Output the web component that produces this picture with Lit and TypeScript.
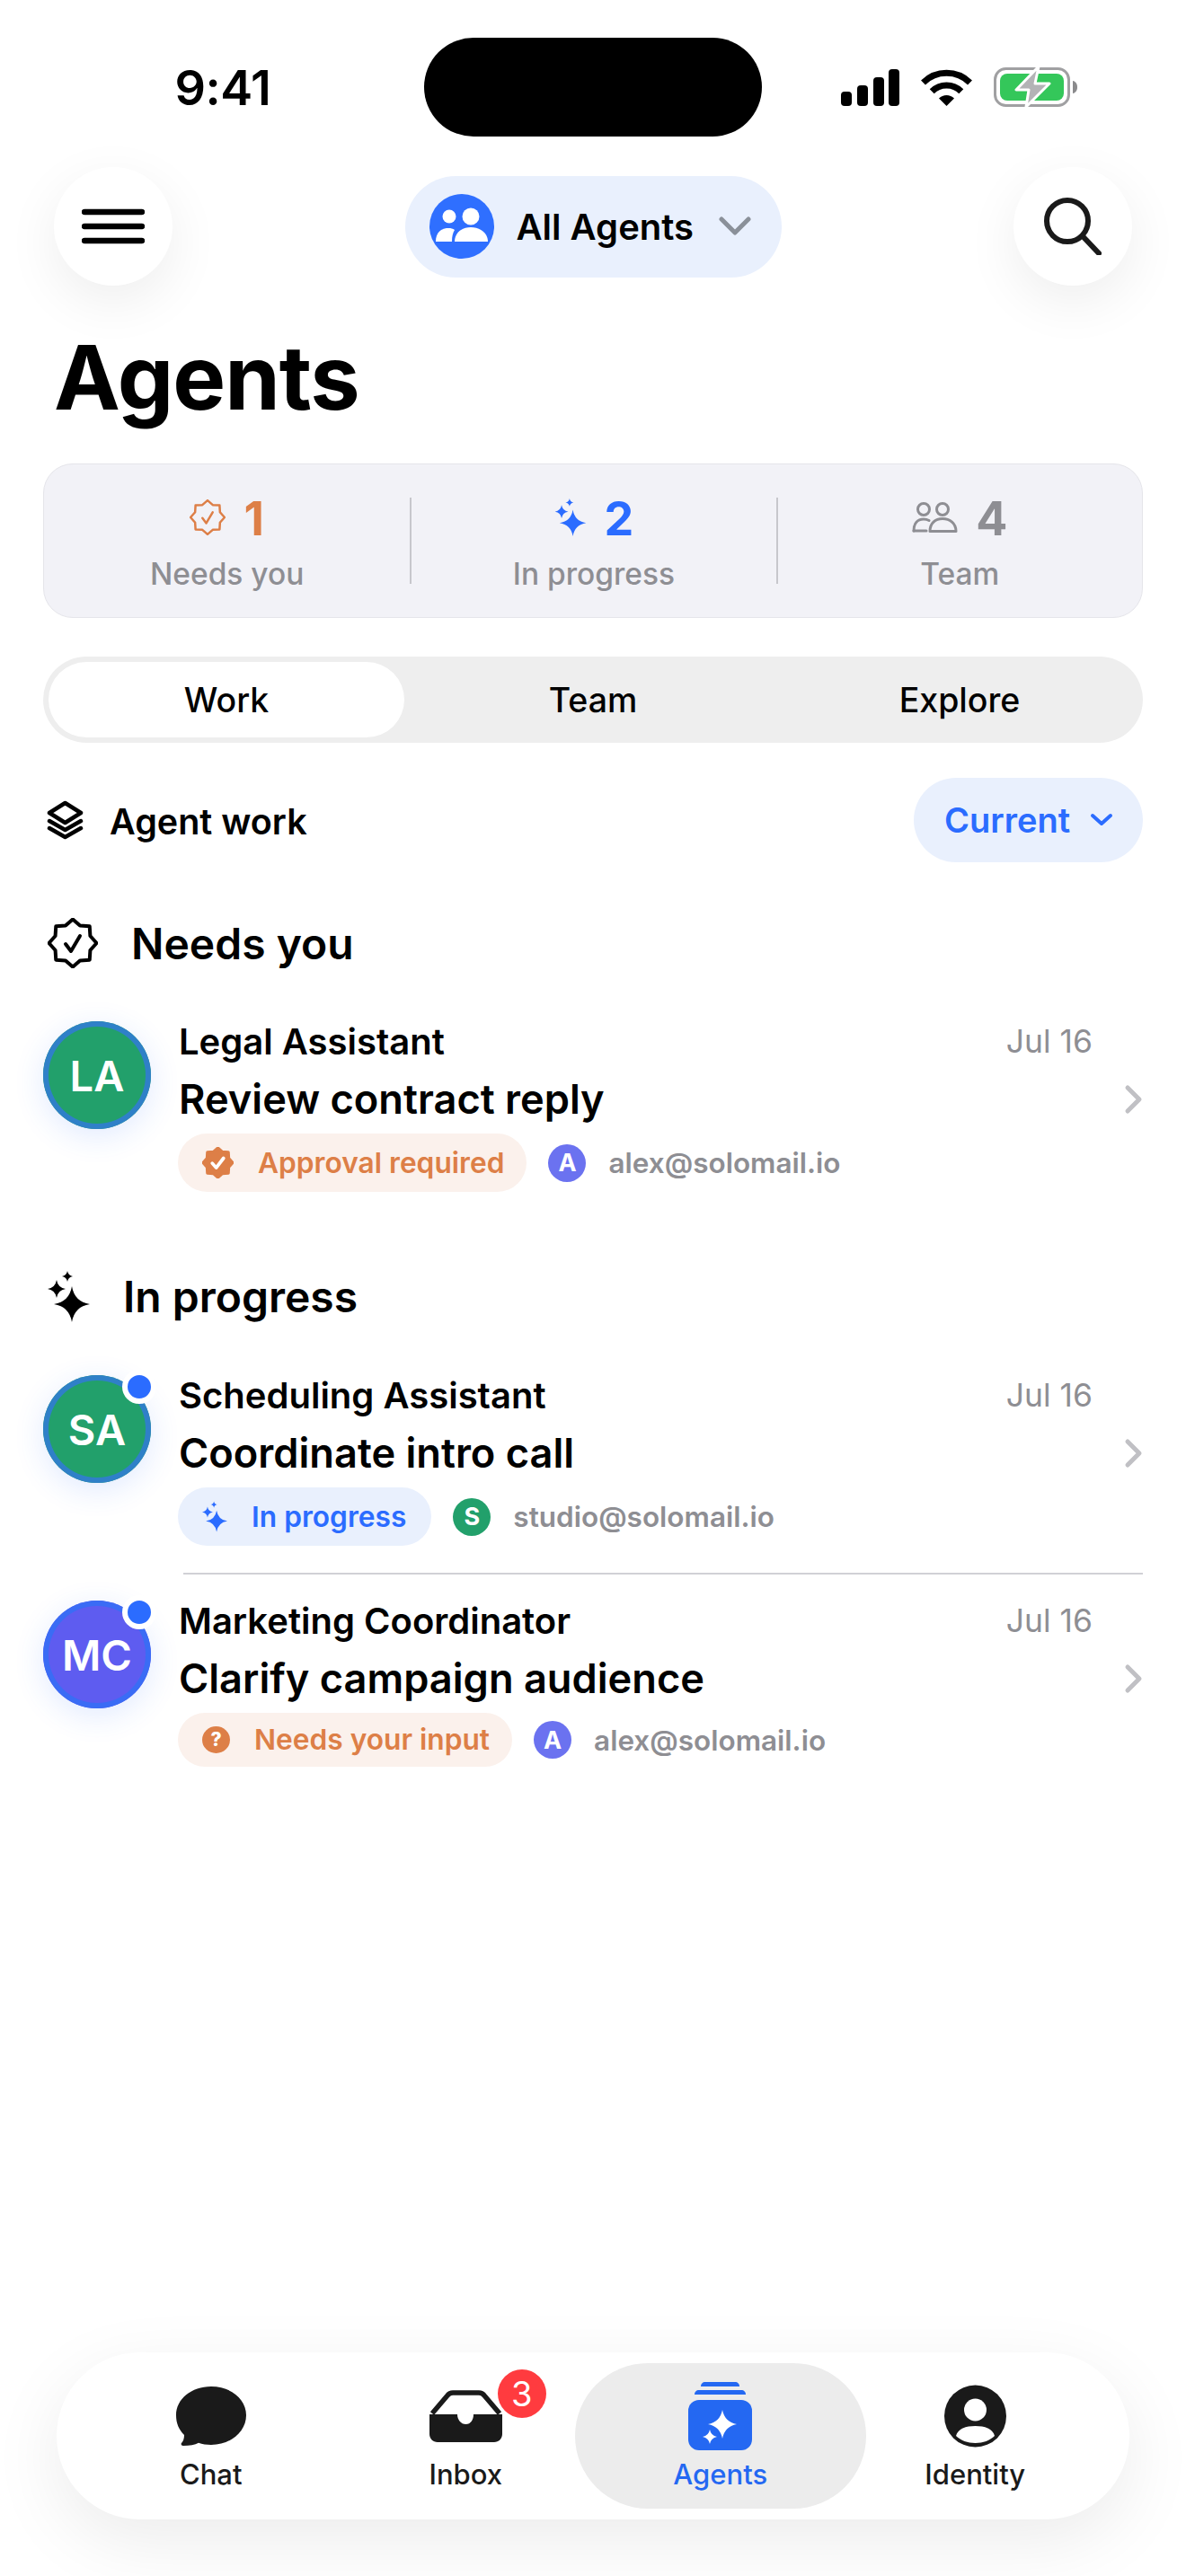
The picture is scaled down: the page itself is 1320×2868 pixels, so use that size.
import { LitElement, html, css } from 'lit';
import { customElement } from 'lit/decorators.js';

// four point star used by every sparkle icon
const star = (x: number, y: number, r: number, k = 0.14) =>
  `M${x} ${y - r}Q${x + r * k} ${y - r * k} ${x + r} ${y}Q${x + r * k} ${y + r * k} ${x} ${y + r}` +
  `Q${x - r * k} ${y + r * k} ${x - r} ${y}Q${x - r * k} ${y - r * k} ${x} ${y - r}Z`;

// scalloped badge outline, 16 vertices round the centre of a 56 box
const badgePoints = (() => {
  const pts: string[] = [];
  for (let i = 0; i < 16; i++) {
    const a = (i * Math.PI) / 8 - Math.PI / 2;
    const r = i % 2 === 0 ? 26.5 : 21;
    pts.push(`${(28 + r * Math.cos(a)).toFixed(2)},${(28 + r * Math.sin(a)).toFixed(2)}`);
  }
  return pts.join(' ');
})();

const sparkles = (w: number, h: number, color: string) => html`
  <svg width=${w} height=${h} viewBox="0 0 47 57" fill=${color}>
    <path d=${star(27, 37, 20)} />
    <path d=${star(10, 20, 10)} />
    <path d=${star(22, 6, 6)} />
  </svg>`;

const badgeOutline = (size: number, color: string, sw: number) => html`
  <svg width=${size} height=${size} viewBox="0 0 56 56" fill="none" stroke=${color} stroke-width=${sw} stroke-linejoin="round" stroke-linecap="round">
    <polygon points=${badgePoints} />
    <path d="M20 29l6 8 10-17" />
  </svg>`;

const badgeFilled = html`
  <svg width="35" height="35" viewBox="0 0 56 56">
    <polygon points=${badgePoints} fill="#dd7f47" stroke="#dd7f47" stroke-width="5" stroke-linejoin="round" />
    <path d="M18 29l7 8 13-17" fill="none" stroke="#fff" stroke-width="6" stroke-linecap="round" stroke-linejoin="round" />
  </svg>`;

const questionIcon = html`<span class="q">?</span>`;

const chevronRight = html`
  <svg class="row-chev" width="22" height="34" viewBox="0 0 22 34" fill="none" stroke="#c0c0c4" stroke-width="5" stroke-linecap="round" stroke-linejoin="round">
    <path d="M4 4l13 13L4 30" />
  </svg>`;

interface Row {
  initials: string;
  tone: 'green' | 'indigo';
  live?: boolean;
  name: string;
  title: string;
  status: string;
  kind: 'orange' | 'blue';
  icon: unknown;
  letter: string;
  letterBg: string;
  email: string;
}

const needsYou: Row[] = [
  {
    initials: 'LA', tone: 'green', name: 'Legal Assistant', title: 'Review contract reply',
    status: 'Approval required', kind: 'orange', icon: badgeFilled,
    letter: 'A', letterBg: '#6b72f0', email: 'alex@solomail.io',
  },
];

const inProgress: Row[] = [
  {
    initials: 'SA', tone: 'green', live: true, name: 'Scheduling Assistant', title: 'Coordinate intro call',
    status: 'In progress', kind: 'blue', icon: sparkles(28, 35, '#2b6cff'),
    letter: 'S', letterBg: '#22a06b', email: 'studio@solomail.io',
  },
  {
    initials: 'MC', tone: 'indigo', live: true, name: 'Marketing Coordinator', title: 'Clarify campaign audience',
    status: 'Needs your input', kind: 'orange', icon: questionIcon,
    letter: 'A', letterBg: '#6b72f0', email: 'alex@solomail.io',
  },
];

@customElement('app-root')
export class AppRoot extends LitElement {
  static styles = css`
    :host {
      display: block;
      width: 1320px;
      background: #fff;
      color: #000;
      font-family: Inter, "Noto Sans", sans-serif;
    }
    .page {
      display: flex;
      flex-direction: column;
      min-height: 2868px;
    }

    /* status bar */
    .status {
      display: grid;
      grid-template-columns: 1fr 376px 1fr;
      align-items: center;
      padding-top: 42px;
      height: 110px;
      box-sizing: content-box;
    }
    .time {
      font-size: 54px;
      font-weight: 600;
      text-align: center;
      padding-left: 24px;
      letter-spacing: -0.5px;
    }
    .island {
      height: 110px;
      background: #000;
      border-radius: 55px;
    }
    .sys {
      display: flex;
      align-items: center;
      padding-left: 88px;
      gap: 24px;
    }

    /* top nav */
    .nav {
      display: flex;
      align-items: center;
      justify-content: space-between;
      margin-top: 34px;
      padding: 0 60px;
      height: 132px;
    }
    .round {
      width: 132px;
      height: 132px;
      border-radius: 50%;
      background: #fff;
      box-shadow: 0 18px 60px rgba(0, 0, 0, 0.07);
      display: flex;
      align-items: center;
      justify-content: center;
    }
    .scope {
      display: flex;
      align-items: center;
      height: 113px;
      width: 419px;
      box-sizing: border-box;
      padding-left: 27px;
      background: #e9f0fd;
      border-radius: 57px;
      font-size: 40px;
      font-weight: 600;
    }
    .scope span {
      margin-left: 25px;
    }
    .scope svg:last-child {
      margin-left: 28px;
    }

    h1 {
      margin: 42px 0 36px;
      padding-left: 60px;
      font-size: 99px;
      line-height: 120px;
      font-weight: 700;
      letter-spacing: -1px;
    }

    /* summary card */
    .stats {
      margin: 0 48px;
      display: grid;
      grid-template-columns: repeat(3, 1fr);
      padding: 37px 0;
      background: #f2f2f7;
      border: 1px solid #e5e5ea;
      border-radius: 33px;
    }
    .stat {
      height: 96px;
      display: flex;
      flex-direction: column;
      align-items: center;
    }
    .stat + .stat {
      border-left: 2px solid #c7c7cc;
    }
    .stat-top {
      height: 44px;
      display: flex;
      align-items: center;
      gap: 20px;
      font-size: 52px;
      font-weight: 700;
    }
    .stat-top span {
      padding-top: 3px;
    }
    .stat-label {
      margin-top: 28px;
      line-height: 26px;
      font-size: 33.500px;
      font-weight: 500;
      color: #8e8e93;
    }
    .orange { color: #dd7f47; }
    .blue { color: #2b6cff; }
    .grey { color: #8e8e93; }

    /* segmented control */
    .tabs {
      margin: 43px 48px 0;
      display: grid;
      grid-template-columns: repeat(3, 1fr);
      height: 96px;
      background: #eeeeee;
      border-radius: 48px;
      font-size: 37.500px;
      font-weight: 500;
    }
    .tabs div {
      margin: 6px;
      display: flex;
      align-items: center;
      justify-content: center;
      border-radius: 42px;
    }
    .tabs .on {
      background: #fff;
    }

    /* agent work row */
    .work {
      margin: 39px 48px 0;
      display: flex;
      align-items: center;
      justify-content: space-between;
    }
    .work-label {
      display: flex;
      align-items: center;
      gap: 29px;
      padding-left: 4px;
      font-size: 39.500px;
      font-weight: 600;
    }
    .work-label span {
      padding-top: 3px;
    }
    .current {
      width: 255px;
      height: 94px;
      box-sizing: border-box;
      padding-left: 34px;
      display: flex;
      align-items: center;
      gap: 22px;
      background: #e9f0fd;
      border-radius: 47px;
      color: #2b6cff;
      font-size: 38px;
      font-weight: 600;
    }

    /* sections */
    .head {
      display: flex;
      align-items: center;
      padding-left: 53px;
      height: 56px;
      font-size: 48px;
      font-weight: 600;
    }
    .head.first {
      margin-top: 62px;
      gap: 37px;
    }
    .head.second {
      margin-top: 88px;
      gap: 37px;
      height: 57px;
    }
    .list {
      margin-top: 58px;
      padding: 0 48px;
    }
    .row {
      display: flex;
      align-items: flex-start;
    }
    .divider {
      height: 2px;
      background: #d1d1d6;
      margin: 30px 0 28px 156px;
    }
    .avatar {
      position: relative;
      flex: none;
      width: 120px;
      height: 120px;
      margin-top: 1px;
      border-radius: 50%;
      display: flex;
      align-items: center;
      justify-content: center;
      color: #fff;
      font-size: 47px;
      font-weight: 600;
    }
    .avatar.green {
      background: #22a06b;
      box-shadow: inset 0 0 0 6px #2f80c8, 0 8px 34px rgba(43, 108, 255, 0.14);
    }
    .avatar.indigo {
      background: #5e5cf0;
      box-shadow: inset 0 0 0 6px #3a6cf5, 0 8px 34px rgba(43, 108, 255, 0.14);
    }
    .dot {
      position: absolute;
      top: -6px;
      right: -6px;
      width: 26px;
      height: 26px;
      border: 6px solid #fff;
      border-radius: 50%;
      background: #2b6cff;
    }
    .body {
      flex: 1;
      margin-left: 31px;
      min-width: 0;
    }
    .line1 {
      display: flex;
      justify-content: space-between;
      align-items: center;
      height: 46px;
      font-size: 40px;
      font-weight: 600;
    }
    .date {
      font-size: 35.500px;
      font-weight: 400;
      color: #8e8e93;
    }
    .line2 {
      margin-top: 14px;
      height: 56px;
      line-height: 56px;
      font-size: 45.200px;
      font-weight: 600;
    }
    .line3 {
      margin-top: 10px;
      display: flex;
      align-items: center;
      margin-left: -1px;
    }
    .pill {
      display: flex;
      align-items: center;
      gap: 27px;
      padding: 15px 25px 15px 27px;
      border-radius: 33px;
      font-size: 31.700px;
      line-height: 30px;
      font-weight: 600;
    }
    .pill.orange { background: #fbf1ec; }
    .pill.blue { background: #e9f0fd; padding-right: 28px; }
    .q {
      width: 31px;
      height: 30px;
      border-radius: 50%;
      background: #dd7f47;
      color: #fff;
      font-size: 21px;
      font-weight: 800;
      display: flex;
      align-items: center;
      justify-content: center;
    }
    .letter {
      width: 42px;
      height: 42px;
      margin-left: 24px;
      border-radius: 50%;
      display: flex;
      align-items: center;
      justify-content: center;
      color: #fff;
      font-size: 27px;
      font-weight: 700;
    }
    .email {
      margin-left: 25px;
      font-size: 31.500px;
      font-weight: 600;
      color: #8e8e93;
    }
    .side {
      flex: none;
      width: 57px;
      height: 176px;
      display: flex;
      align-items: center;
      justify-content: flex-end;
      margin-right: -1px;
    }

    /* bottom tab bar */
    .bar {
      margin: auto 63px 63px;
      height: 186px;
      padding: 0 30px;
      display: grid;
      grid-template-columns: repeat(4, 1fr);
      background: #fff;
      border-radius: 93px;
      box-shadow: 0 24px 80px rgba(0, 0, 0, 0.08);
    }
    .item {
      margin: 12px 0;
      padding-top: 21px;
      display: flex;
      flex-direction: column;
      align-items: center;
      color: #1a1a1a;
      font-size: 31px;
      font-weight: 500;
    }
    .item.on {
      margin: 12px -20px;
      background: #ececec;
      border-radius: 81px;
      color: #2468f2;
    }
    .ico {
      position: relative;
      height: 76px;
      display: flex;
      align-items: center;
    }
    .item span {
      margin-top: 7px;
      line-height: 40px;
    }
    .ico b {
      position: absolute;
      left: 76px;
      top: -14px;
      width: 54px;
      height: 54px;
      border-radius: 50%;
      background: #ff3b3f;
      color: #fff;
      font-size: 38px;
      font-weight: 400;
      display: flex;
      align-items: center;
      justify-content: center;
    }
  `;

  private renderRow(r: Row) {
    return html`
      <div class="row">
        <div class="avatar ${r.tone}">
          ${r.initials}
          ${r.live ? html`<i class="dot"></i>` : null}
        </div>
        <div class="body">
          <div class="line1"><span>${r.name}</span><span class="date">Jul 16</span></div>
          <div class="line2">${r.title}</div>
          <div class="line3">
            <div class="pill ${r.kind}">${r.icon}<span>${r.status}</span></div>
            <span class="letter" style="background:${r.letterBg}">${r.letter}</span>
            <span class="email">${r.email}</span>
          </div>
        </div>
        <div class="side">${chevronRight}</div>
      </div>`;
  }

  private statusBar() {
    return html`
      <div class="status">
        <div class="time">9:41</div>
        <div class="island"></div>
        <div class="sys">
          <svg width="65" height="41" viewBox="0 0 65 41" fill="#000">
            <rect x="0" y="25" width="12" height="16" rx="4" />
            <rect x="18" y="18" width="12" height="23" rx="4" />
            <rect x="36" y="9" width="12" height="32" rx="4" />
            <rect x="53" y="0" width="12" height="41" rx="4" />
          </svg>
          <svg width="57" height="42" viewBox="0 0 57 42" fill="none" stroke="#000" stroke-width="7">
            <path d="M2.500 16A37 37 0 0 1 54.500 16" />
            <path d="M12.200 25.700A23 23 0 0 1 44.800 25.700" />
            <path d="M28.500 42L20 33.500A12 12 0 0 1 37 33.500Z" fill="#000" stroke="none" />
          </svg>
          <svg width="93" height="48" viewBox="0 -2 93 48">
            <rect x="1.500" y="1.500" width="82" height="41" rx="12" fill="none" stroke="#a0a0a2" stroke-width="3" />
            <rect x="7" y="7" width="71" height="30" rx="8" fill="#34c75a" />
            <path d="M88 15c3 .5 5 3 5 7s-2 6.500-5 7z" fill="#8a8a8c" />
            <path d="M50 -1L25 25h14L36 44 62 18H46z" fill="#b3b3b6" stroke="#fff" stroke-width="3" stroke-linejoin="round" />
          </svg>
        </div>
      </div>`;
  }

  private nav() {
    return html`
      <div class="nav">
        <div class="round">
          <svg width="70" height="42" viewBox="0 0 70 42" stroke="#000" stroke-width="6.500" stroke-linecap="round">
            <path d="M3 5h64M3 21h64M3 37h64" />
          </svg>
        </div>
        <div class="scope">
          <svg width="72" height="72" viewBox="0 0 72 72">
            <circle cx="36" cy="36" r="36" fill="#2f6fff" />
            <g fill="#fff">
              <circle cx="22" cy="25" r="7.500" />
              <circle cx="46" cy="25" r="9.500" />
              <path d="M7 53c0-10 6-15 14-15 3 0 5 .6 7 2-2 3-3 7-3 13z" />
              <path d="M28 53c0-10 8-16 18-16s19 6 19 16z" />
            </g>
          </svg>
          <span>All Agents</span>
          <svg width="36" height="22" viewBox="0 0 36 22" fill="none" stroke="#8a9099" stroke-width="5" stroke-linecap="round" stroke-linejoin="round">
            <path d="M3 3l15 15L33 3" />
          </svg>
        </div>
        <div class="round">
          <svg width="64" height="64" viewBox="0 0 64 64" fill="none" stroke="#1a1a1a" stroke-width="6" stroke-linecap="round">
            <circle cx="26" cy="26" r="23" />
            <path d="M43 43l18 19" />
          </svg>
        </div>
      </div>`;
  }

  private stats() {
    return html`
      <div class="stats">
        <div class="stat">
          <div class="stat-top orange">${badgeOutline(40, '#dd7f47', 3.5)}<span>1</span></div>
          <div class="stat-label">Needs you</div>
        </div>
        <div class="stat">
          <div class="stat-top blue">${sparkles(36, 42, '#2b6cff')}<span>2</span></div>
          <div class="stat-label">In progress</div>
        </div>
        <div class="stat">
          <div class="stat-top grey">
            <svg width="51" height="34" viewBox="0 0 51 34" fill="none" stroke="#8e8e93" stroke-width="3">
              <circle cx="13" cy="8" r="6.500" />
              <circle cx="34" cy="8" r="6.500" />
              <path d="M2 32c0-8 4-13 11-13 2 0 4 .4 6 1.500" stroke-linecap="round" />
              <path d="M2 32h14" stroke-linecap="round" />
              <path d="M20 32.500c0-9 6-14 14-14s15 5 15 14z" stroke-linejoin="round" />
            </svg>
            <span>4</span>
          </div>
          <div class="stat-label">Team</div>
        </div>
      </div>`;
  }

  private tabBar() {
    return html`
      <div class="bar">
        <div class="item">
          <div class="ico">
            <svg width="78" height="66" viewBox="0 0 78 66" fill="#1a1a1a">
              <path d="M39 0c22 0 39 14 39 32S61 65 39 65c-5 0-10-.8-14-2.200-4 2.200-10 3.200-17 3.200-2 0-3-2-2-3 2-2 3-5 3-9C3 48 0 41 0 32 0 14 17 0 39 0z" />
            </svg>
          </div>
          <span>Chat</span>
        </div>
        <div class="item">
          <div class="ico">
            <svg width="81" height="58" viewBox="0 0 81 58">
              <path d="M3 26L20 6c1.500-2 3.500-3 6-3h29c2.500 0 4.500 1 6 3l17 20" fill="none" stroke="#1a1a1a" stroke-width="5.500" />
              <path d="M0 27h31c0 6 4 11 9.500 11S49 33 49 27h32v22c0 5-4 9-9 9H9c-5 0-9-4-9-9z" fill="#1a1a1a" />
            </svg>
            <b>3</b>
          </div>
          <span>Inbox</span>
        </div>
        <div class="item on">
          <div class="ico">
            <svg width="71" height="76" viewBox="0 0 71 76" fill="#2468f2">
              <path d="M14 5c0-3 2-5 5-5h33c3 0 5 2 5 5z" />
              <path d="M7 14c0-3 2-5 5-5h47c3 0 5 2 5 5z" />
              <rect x="0" y="20" width="71" height="56" rx="12" />
              <path d=${star(38, 47, 16, 0.16)} fill="#fff" />
              <path d=${star(24, 61, 8, 0.16)} fill="#fff" />
            </svg>
          </div>
          <span>Agents</span>
        </div>
        <div class="item">
          <div class="ico">
            <svg width="69" height="70" viewBox="0 0 69 70">
              <circle cx="34.500" cy="35" r="34.500" fill="#1a1a1a" />
              <circle cx="34.500" cy="28" r="12.500" fill="#fff" />
              <path d="M13 57c2-8 11-11 21.500-11S54 49 56 57c-5 5-13 8-21.500 8S18 62 13 57z" fill="#fff" />
            </svg>
          </div>
          <span>Identity</span>
        </div>
      </div>`;
  }

  render() {
    return html`
      <div class="page">
        ${this.statusBar()}
        ${this.nav()}
        <h1>Agents</h1>
        ${this.stats()}
        <div class="tabs">
          <div class="on">Work</div>
          <div>Team</div>
          <div>Explore</div>
        </div>
        <div class="work">
          <div class="work-label">
            <svg width="41" height="44" viewBox="0 0 41 44" fill="none" stroke="#000" stroke-width="4.500" stroke-linejoin="round" stroke-linecap="round">
              <path d="M20.500 3L38 14 20.500 25 3 14z" />
              <path d="M3 23l17.500 10L38 23" />
              <path d="M3 31l17.500 10L38 31" />
            </svg>
            <span>Agent work</span>
          </div>
          <div class="current">
            <span>Current</span>
            <svg width="26" height="16" viewBox="0 0 26 16" fill="none" stroke="#2b6cff" stroke-width="4" stroke-linecap="round" stroke-linejoin="round">
              <path d="M3 3l10 9 10-9" />
            </svg>
          </div>
        </div>

        <div class="head first">${badgeOutline(56, '#000', 4)}<span>Needs you</span></div>
        <div class="list">${needsYou.map((r) => this.renderRow(r))}</div>

        <div class="head second">${sparkles(47, 57, '#000')}<span>In progress</span></div>
        <div class="list">
          ${this.renderRow(inProgress[0])}
          <div class="divider"></div>
          ${this.renderRow(inProgress[1])}
        </div>

        ${this.tabBar()}
      </div>
    `;
  }
}
